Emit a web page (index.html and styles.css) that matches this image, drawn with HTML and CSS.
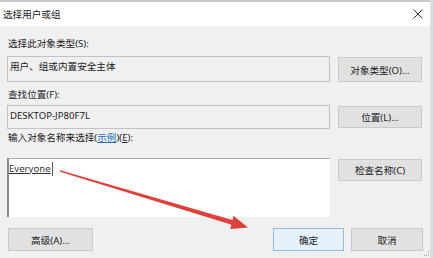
FILE: index.html
```html
<!DOCTYPE html>
<html lang="zh-CN">
<head>
  <meta charset="UTF-8">
  <title>选择用户或组</title>
  <link rel="stylesheet" href="styles.css">
</head>
<body>

<div class="dialog">
  <div class="titlebar">
    <span class="title">选择用户或组</span>
    <svg class="close" width="10" height="10" viewBox="0 0 10 10">
      <path d="M0.5 0.5 L9.5 9.5 M9.5 0.5 L0.5 9.5" stroke="#333" stroke-width="1" fill="none"/>
    </svg>
  </div>

  <div class="content">
    <div class="label first">选择此对象类型(S):</div>
    <div class="row">
      <div class="field tall">用户、组或内置安全主体</div>
      <button class="btn first-btn">对象类型(O)...</button>
    </div>

    <div class="label second">查找位置(F):</div>
    <div class="row second-row">
      <div class="field">DESKTOP-JP80F7L</div>
      <button class="btn">位置(L)...</button>
    </div>

    <div class="label third">输入对象名称来选择(<a class="link">示例</a>)(<u>E</u>):</div>
    <div class="row third-row">
      <div class="names"><span class="name">Everyone</span><span class="caret"></span></div>
      <button class="btn">检查名称(C)</button>
    </div>

    <div class="footer">
      <button class="btn wide">高级(A)...</button>
      <div class="spacer"></div>
      <button class="btn ok">确定</button>
      <button class="btn cancel">取消</button>
    </div>
  </div>

  <div class="grip"></div>
</div>

<svg class="arrow" width="433" height="258" viewBox="0 0 433 258">
  <polygon points="60,170.3 234,220.6 232.6,225 60,171.7" fill="#e0403a"/>
  <polygon points="248,227.5 233.5,215.8 230.4,229" fill="#e0403a"/>
</svg>

</body>
</html>
```

FILE: styles.css
```css
body {
  margin: 0;
  width: 433px;
  height: 258px;
  overflow: hidden;
  font-family: "Noto Sans", "Noto Sans CJK SC", sans-serif;
  font-size: 9.6px;
  color: #1a1a1a;
  background: #f0f0f0;
}
.dialog {
  height: 258px;
  box-sizing: border-box;
  border-right: 3px solid #dcdde0;
}
.titlebar {
  height: 24px;
  border-top: 2px solid #c4c8cc;
  background: #fff;
  display: flex;
  align-items: center;
  padding-left: 3px;
  padding-right: 7px;
}
.title {
  flex: 1;
}
.content {
  padding-left: 7px;
}
.label {
  height: 16px;
  line-height: 16px;
  padding-left: 1px;
}
.label.first {
  margin-top: 10px;
}
.label.second {
  margin-top: 5px;
}
.label.third {
  margin-top: 1px;
}
.link {
  color: #1a6fc2;
  text-decoration: underline;
}
.row {
  display: grid;
  grid-template-columns: 323px 84px;
  column-gap: 8px;
  align-items: start;
  margin-top: 4px;
}
.second-row {
  margin-top: 2px;
}
.third-row {
  margin-top: 12px;
}
.field {
  height: 24px;
  box-sizing: border-box;
  border: 1px solid #c2c2c2;
  background: #f0f0f0;
  padding: 3px 2px;
  line-height: 14px;
}
.field.tall {
  height: 26px;
}
.names {
  height: 59px;
  box-sizing: border-box;
  background: #fff;
  border-top: 1px solid #a8a8a8;
  border-left: 2px solid #8a8a8a;
  padding: 3px 0 0 0;
  line-height: 14px;
  display: flex;
  align-items: flex-start;
}
.name {
  text-decoration: underline;
  color: #333;
}
.caret {
  width: 1px;
  height: 14px;
  background: #555;
  margin-left: 1px;
}
.btn {
  font: inherit;
  color: #1a1a1a;
  height: 22px;
  margin-top: 1px;
  padding: 0;
  background: #e1e1e1;
  border: 1px solid #c9c9c9;
}
.first-btn {
  height: 25px;
}
.footer {
  display: flex;
  margin-top: 11px;
  padding-right: 7px;
  gap: 7px;
}
.footer .btn {
  height: 23px;
  margin-top: 0;
}
.wide {
  width: 85px;
  margin-left: 1px;
}
.spacer {
  flex: 1;
}
.ok {
  width: 71px;
  background: #e5f1fb;
  border-color: #8fbde6;
}
.cancel {
  width: 72px;
}
.grip {
  position: absolute;
  right: 4px;
  bottom: 2px;
  width: 4px;
  height: 4px;
  border-right: 1px dotted #aaa;
  border-bottom: 1px dotted #aaa;
}
.close {
  display: block;
}
.arrow {
  position: absolute;
  left: 0;
  top: 0;
}
```
